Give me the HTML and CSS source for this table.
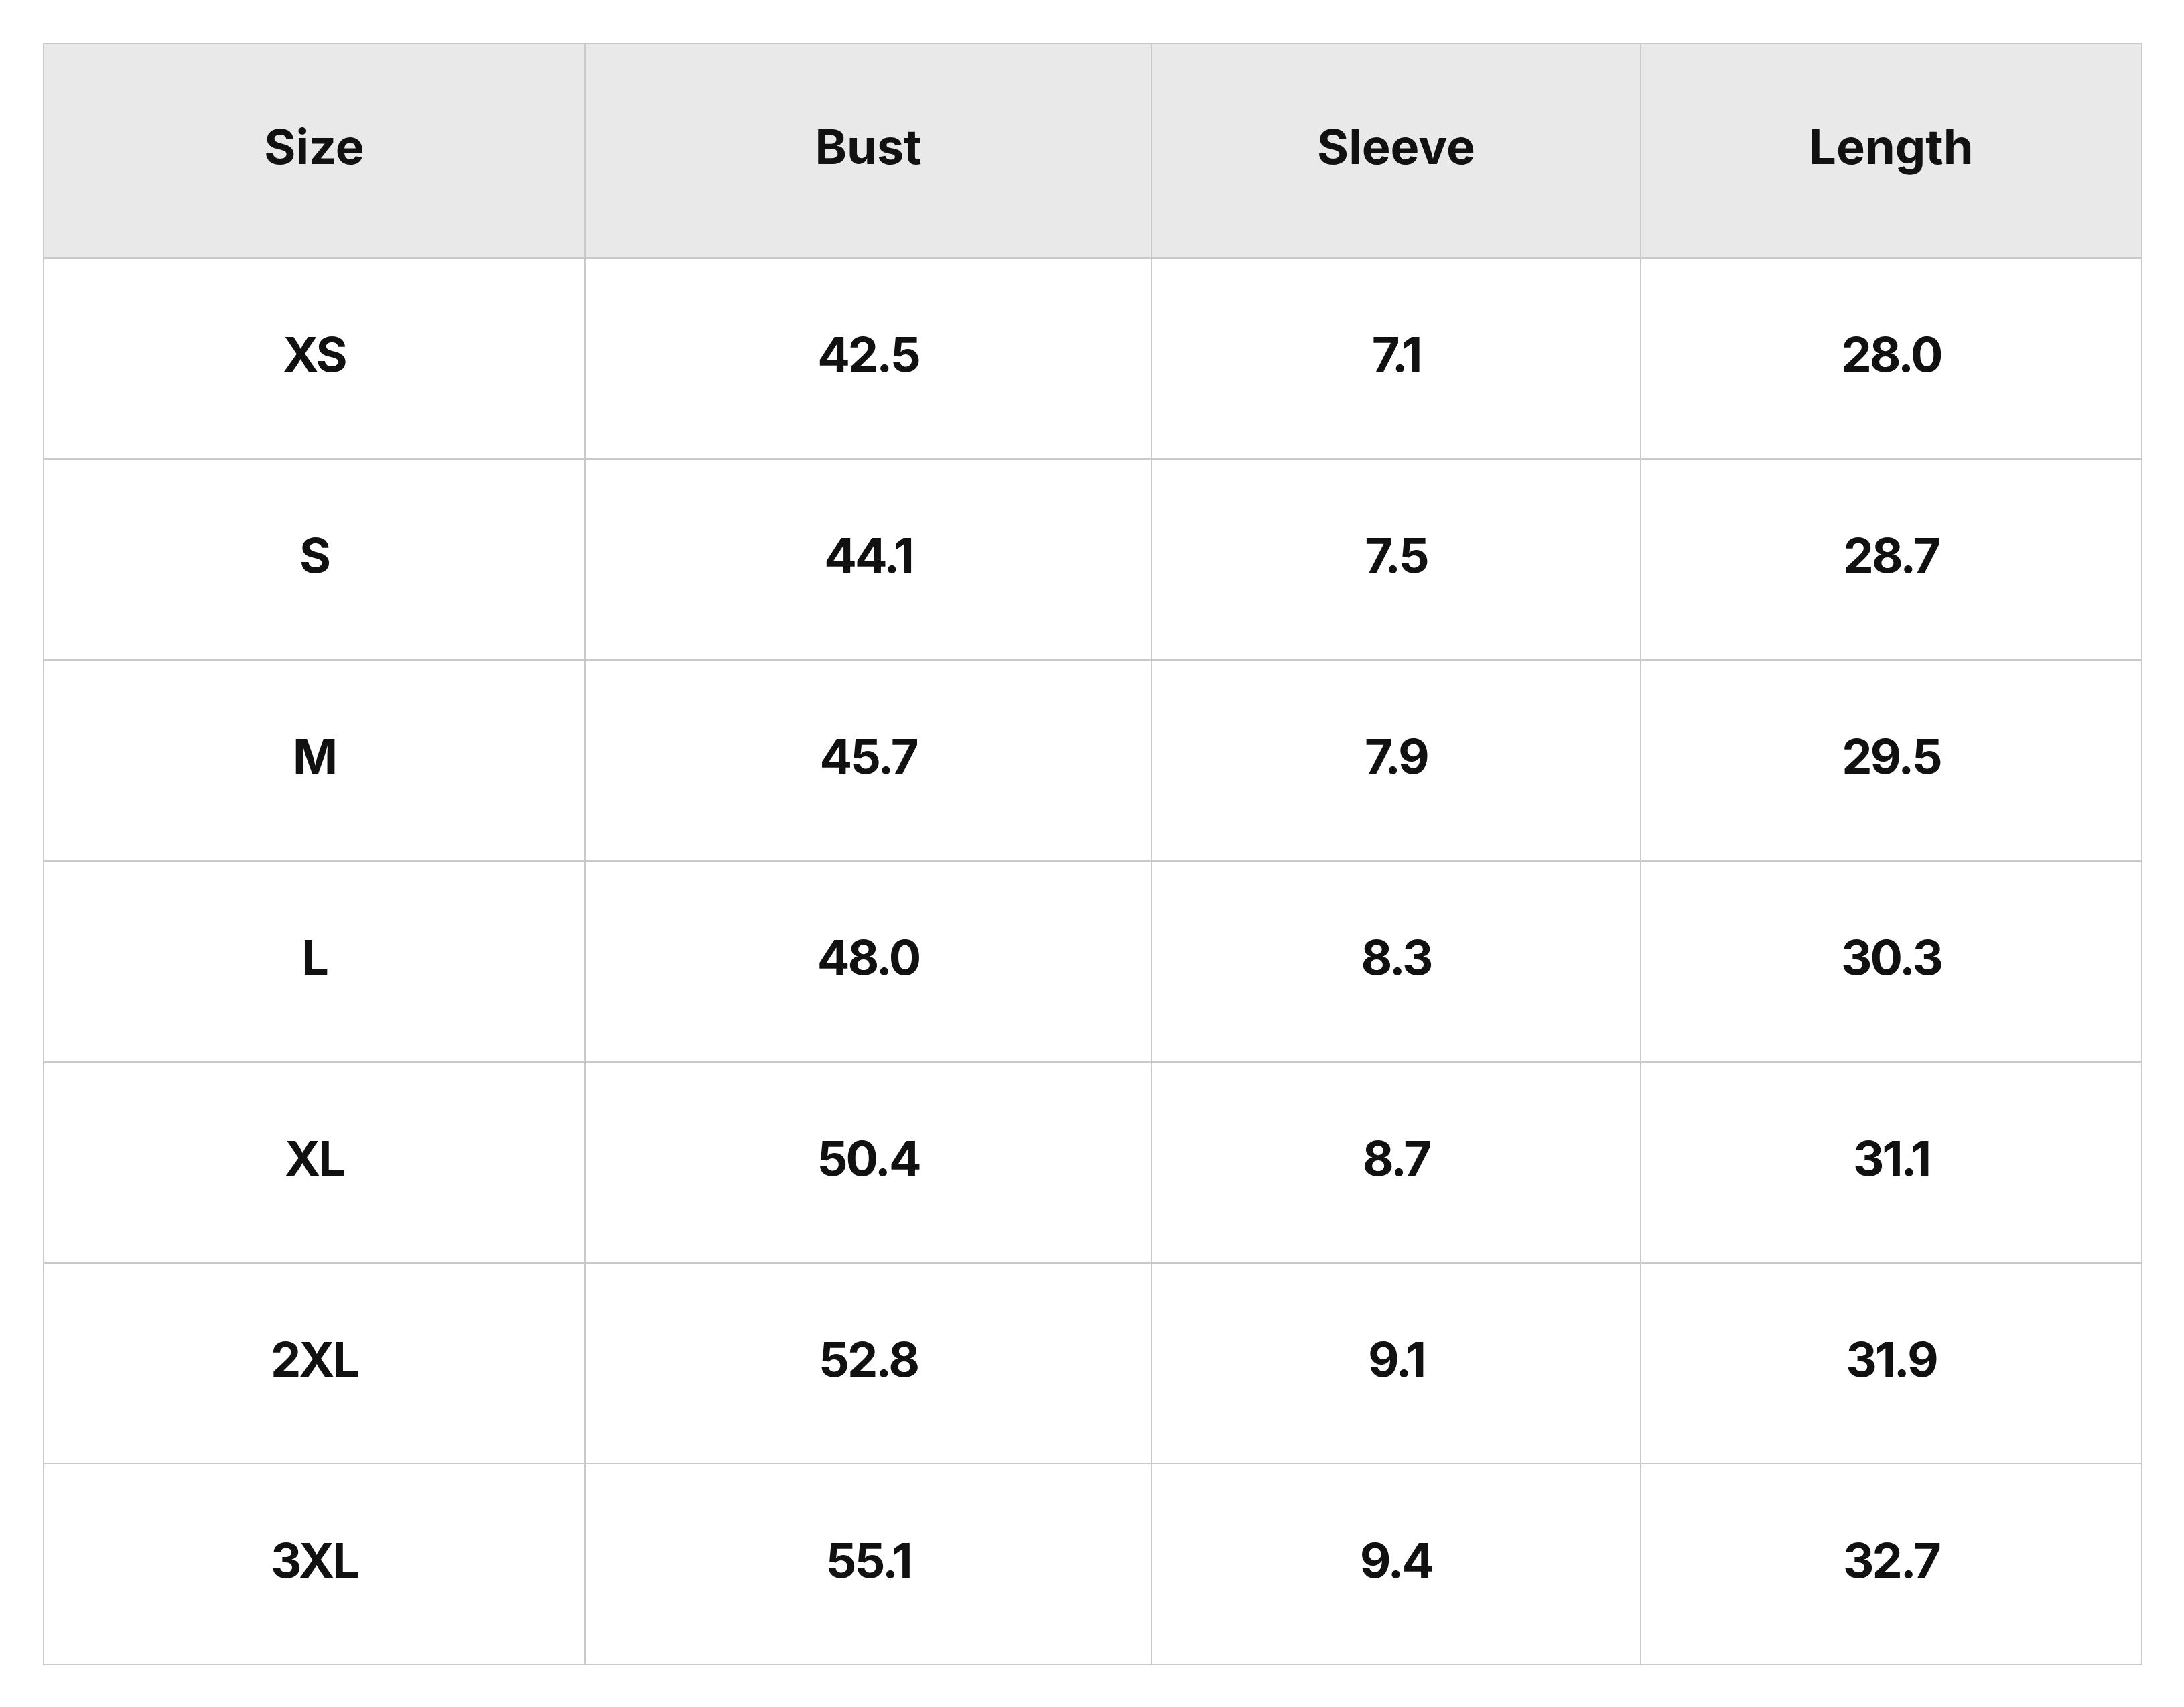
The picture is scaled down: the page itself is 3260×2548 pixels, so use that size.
FILE: index.html
```html
<!DOCTYPE html>
<html lang="en">
<head>
<meta charset="utf-8">
<title>Size Chart</title>
<link rel="stylesheet" href="styles.css">
</head>
<body>
<main class="page">
  <table class="size-table">
    <colgroup>
      <col class="col-size">
      <col class="col-bust">
      <col class="col-sleeve">
      <col class="col-length">
    </colgroup>
    <thead>
      <tr>
        <th>Size</th>
        <th>Bust</th>
        <th>Sleeve</th>
        <th>Length</th>
      </tr>
    </thead>
    <tbody>
      <tr><td>XS</td><td>42.5</td><td>7.1</td><td>28.0</td></tr>
      <tr><td>S</td><td>44.1</td><td>7.5</td><td>28.7</td></tr>
      <tr><td>M</td><td>45.7</td><td>7.9</td><td>29.5</td></tr>
      <tr><td>L</td><td>48.0</td><td>8.3</td><td>30.3</td></tr>
      <tr><td>XL</td><td>50.4</td><td>8.7</td><td>31.1</td></tr>
      <tr><td>2XL</td><td>52.8</td><td>9.1</td><td>31.9</td></tr>
      <tr><td>3XL</td><td>55.1</td><td>9.4</td><td>32.7</td></tr>
    </tbody>
  </table>
</main>
</body>
</html>
```

FILE: styles.css
```css
html, body {
  margin: 0;
  padding: 0;
  background: #ffffff;
}

.page {
  padding: 64px;
}

.size-table {
  width: 3132px;
  table-layout: fixed;
  border-collapse: collapse;
  font-family: "Inter", "Liberation Sans", sans-serif;
  font-weight: 700;
  font-size: 72px;
  color: #111111;
}

.col-size { width: 808px; }
.col-bust { width: 846px; }
.col-sleeve { width: 730px; }
.col-length { width: 748px; }

.size-table th,
.size-table td {
  border: 2px solid #c9c9c9;
  text-align: center;
  vertical-align: middle;
  padding: 0 0 14px 0;
}

.size-table th {
  background: #e9e9e9;
  height: 304px;
  font-weight: 700;
}

.size-table td {
  height: 284px;
  letter-spacing: -3px;
}
```
